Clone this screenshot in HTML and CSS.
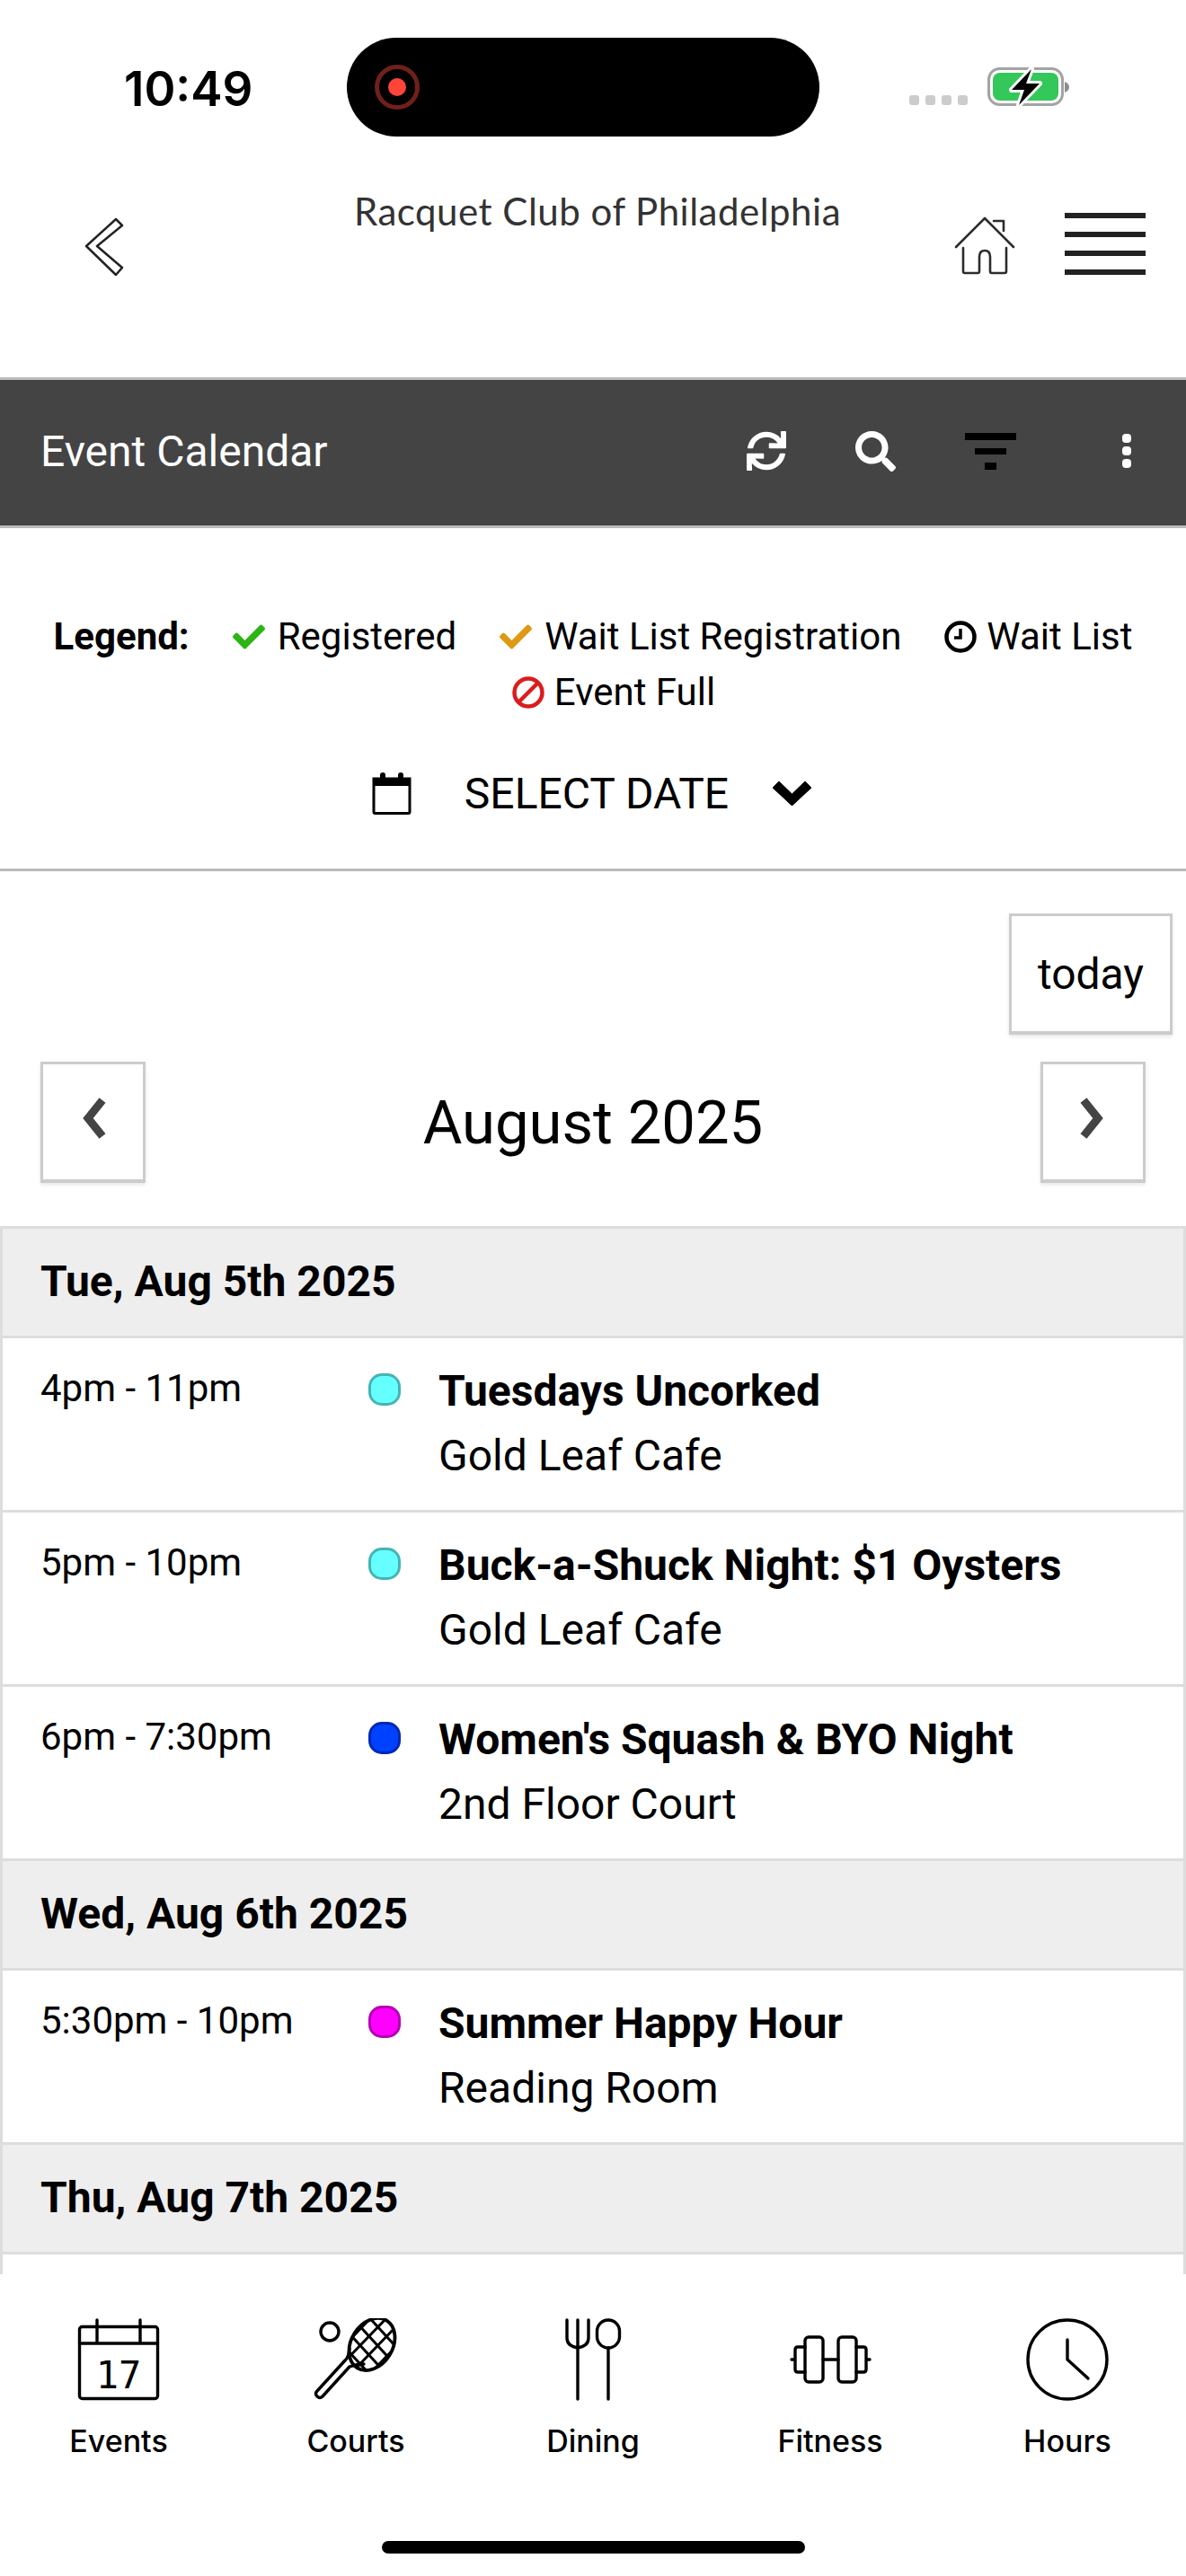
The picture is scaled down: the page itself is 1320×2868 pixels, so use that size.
FILE: index.html
```html
<!DOCTYPE html>
<html>
<head>
	<meta charset="utf-8">
	<meta name="viewport" content="width=device-width, initial-scale=1">
	<title>Event Calendar</title>
	<link rel="stylesheet" href="styles.css">
</head>
<body>

    <div class="top">
        <div class="status">
            <div class="time">10:49</div>
            <div class="island">
                <span class="rec"></span>
            </div>
            <svg class="status-right" width="182" height="46" viewBox="0 0 182 46">
                <rect x="0" y="31" width="11" height="11" rx="3" fill="#ccc"/>
                <rect x="18" y="31" width="11" height="11" rx="3" fill="#ccc"/>
                <rect x="36" y="31" width="11" height="11" rx="3" fill="#ccc"/>
                <rect x="54" y="31" width="11" height="11" rx="3" fill="#ccc"/>
                <rect x="88.5" y="1.5" width="82" height="40" rx="12" fill="none" stroke="#a3a3a3" stroke-width="3"/>
                <rect x="93" y="6" width="73" height="31" rx="8" fill="#34c759"/>
                <path d="M173 16c3 1 5 3 5 6s-2 5-5 6z" fill="#8e8e8e"/>
                <path d="M136 2L114 25h14l-6 17L145 18h-15z" fill="#000" stroke="#fff" stroke-width="6" stroke-linejoin="round" paint-order="stroke"/>
            </svg>
        </div>

        <div class="header">
            <svg class="back" width="45" height="66" viewBox="0 0 45 66">
                <path d="M35 2L42 9L14 32L42 56L35 64L2 32Z" fill="none" stroke="#222" stroke-width="2.5" stroke-linejoin="round"/>
            </svg>
            <div class="club">Racquet Club of Philadelphia</div>
            <svg class="home" width="68" height="66" viewBox="0 0 68 66">
                <path d="M2 34L34 2L66 34M44 5h11v11M10 35V61q0 2 2 2h14q2 0 2-2V45q0-7 6-7t6 7V61q0 2 2 2h14q2 0 2-2V35" fill="none" stroke="#2c2c2c" stroke-width="2.6" stroke-linecap="round" stroke-linejoin="round"/>
            </svg>
            <div class="burger">
                <div></div>
                <div></div>
                <div></div>
                <div></div>
            </div>
        </div>
    </div>

    <div class="titlebar">
        <div class="page-title">Event Calendar</div>
        <div class="tools">
            <svg width="44" height="44" viewBox="0 0 512 512" fill="#fff">
                <path d="M440.65 12.57l4 82.77A247.16 247.16 0 0 0 255.83 8C134.73 8 33.91 94.92 12.29 209.82A12 12 0 0 0 24.09 224h49.05a12 12 0 0 0 11.67-9.26 175.91 175.91 0 0 1 317-56.94l-101.46-4.86a12 12 0 0 0-12.57 12v47.41a12 12 0 0 0 12 12H500a12 12 0 0 0 12-12V12a12 12 0 0 0-12-12h-47.37a12 12 0 0 0-11.98 12.57zM255.83 432a175.61 175.61 0 0 1-146-77.8l101.8 4.87a12 12 0 0 0 12.57-12v-47.4a12 12 0 0 0-12-12H12a12 12 0 0 0-12 12V500a12 12 0 0 0 12 12h47.35a12 12 0 0 0 12-12.6l-4.15-82.57A247.17 247.17 0 0 0 255.83 504c121.11 0 221.93-86.92 243.55-201.82a12 12 0 0 0-11.8-14.18h-49.05a12 12 0 0 0-11.67 9.26A175.86 175.86 0 0 1 255.83 432z"/>
            </svg>
            <svg width="45" height="45" viewBox="0 0 512 512" fill="#fff">
                <path d="M505 442.7L405.3 343c-4.5-4.5-10.6-7-17-7H372c27.6-35.3 44-79.7 44-128C416 93.1 322.9 0 208 0S0 93.1 0 208s93.1 208 208 208c48.3 0 92.7-16.4 128-44v16.3c0 6.4 2.5 12.5 7 17l99.7 99.7c9.4 9.4 24.6 9.4 33.9 0l28.3-28.3c9.4-9.4 9.4-24.6.1-34zM208 336c-70.7 0-128-57.2-128-128 0-70.7 57.2-128 128-128 70.7 0 128 57.2 128 128 0 70.7-57.2 128-128 128z"/>
            </svg>
            <svg width="57" height="41" viewBox="0 0 57 41" fill="#000">
                <rect x="0" y="0" width="57" height="8"/>
                <rect x="11" y="17" width="35" height="7"/>
                <rect x="22" y="33" width="13" height="8"/>
            </svg>
            <svg class="kebab" width="12" height="38" viewBox="0 0 12 38" fill="#fff">
                <rect x="1" y="0" width="10" height="10" rx="4"/>
                <rect x="1" y="14" width="10" height="10" rx="4"/>
                <rect x="1" y="28" width="10" height="10" rx="4"/>
            </svg>
        </div>
    </div>

    <div class="legend">
        <b>Legend:</b>
        <span class="legend-item">
            <svg class="legend-icon" viewBox="0 0 512 512" fill="#2cb515"><path d="M173.898 439.404l-166.4-166.4c-9.997-9.997-9.997-26.206 0-36.204l36.203-36.204c9.997-9.998 26.207-9.998 36.204 0L192 312.69 432.095 72.596c9.997-9.997 26.207-9.997 36.204 0l36.203 36.204c9.997 9.997 9.997 26.206 0 36.204l-294.4 294.401c-9.998 9.997-26.207 9.997-36.204-.001z"/></svg>
            Registered
        </span>
        <span class="legend-item">
            <svg class="legend-icon" viewBox="0 0 512 512" fill="#e09a12"><path d="M173.898 439.404l-166.4-166.4c-9.997-9.997-9.997-26.206 0-36.204l36.203-36.204c9.997-9.998 26.207-9.998 36.204 0L192 312.69 432.095 72.596c9.997-9.997 26.207-9.997 36.204 0l36.203 36.204c9.997 9.997 9.997 26.206 0 36.204l-294.4 294.401c-9.998 9.997-26.207 9.997-36.204-.001z"/></svg>
            Wait List Registration
        </span>
        <span class="legend-item legend-tight">
            <svg class="legend-icon" viewBox="0 0 36 36" fill="none" stroke="#000"><circle cx="18" cy="18" r="15.5" stroke-width="4.5"/><path d="M18 9v10h-7" stroke-width="3.5"/></svg>
            Wait List
        </span>
        <span class="legend-item legend-tight legend-full">
            <svg class="legend-icon" viewBox="0 0 36 36" fill="none" stroke="#dc1c1c" stroke-width="4.5"><circle cx="18" cy="18" r="15.5"/><path d="M28 8L8 28"/></svg>
            Event Full
        </span>
    </div>

    <div class="select-date">
        <svg width="44" height="47" viewBox="0 0 44 47">
            <path d="M2 7h40v37q0 1.500-1.500 1.500H3.500Q2 45.500 2 44Z" fill="none" stroke="#000" stroke-width="3"/>
            <rect x="1" y="6" width="42" height="9" fill="#000"/>
            <rect x="9" y="0" width="6" height="12" rx="3" fill="#000"/>
            <rect x="29" y="0" width="6" height="12" rx="3" fill="#000"/>
        </svg>
        <span class="select-text">SELECT DATE</span>
        <svg width="43" height="28" viewBox="0 0 43 28">
            <path d="M0 8L7 1L21.500 15L36 1L43 8L21.500 28Z" fill="#000" stroke="#000" stroke-width="1" stroke-linejoin="round"/>
        </svg>
    </div>

    <div class="toolbar">
        <div class="today-row">
            <button class="btn today">today</button>
        </div>
        <div class="month-row">
            <button class="btn arrow">
                <svg width="32" height="46" viewBox="0 0 32 46"><path d="M26 3L10 23L26 43" fill="none" stroke="#444" stroke-width="9"/></svg>
            </button>
            <div class="month">August 2025</div>
            <button class="btn arrow">
                <svg width="32" height="46" viewBox="0 0 32 46"><path d="M6 3L22 23L6 43" fill="none" stroke="#444" stroke-width="9"/></svg>
            </button>
        </div>
    </div>

    <div class="list">
        <div class="day">Tue, Aug 5th 2025</div>
        <div class="event">
            <div class="event-time">4pm - 11pm</div>
            <span class="dot cyan"></span>
            <div>
                <div class="event-name">Tuesdays Uncorked</div>
                <div class="event-place">Gold Leaf Cafe</div>
            </div>
        </div>
        <div class="event">
            <div class="event-time">5pm - 10pm</div>
            <span class="dot cyan"></span>
            <div>
                <div class="event-name">Buck-a-Shuck Night: $1 Oysters</div>
                <div class="event-place">Gold Leaf Cafe</div>
            </div>
        </div>
        <div class="event">
            <div class="event-time">6pm - 7:30pm</div>
            <span class="dot blue"></span>
            <div>
                <div class="event-name">Women's Squash &amp; BYO Night</div>
                <div class="event-place">2nd Floor Court</div>
            </div>
        </div>
        <div class="day">Wed, Aug 6th 2025</div>
        <div class="event">
            <div class="event-time">5:30pm - 10pm</div>
            <span class="dot magenta"></span>
            <div>
                <div class="event-name">Summer Happy Hour</div>
                <div class="event-place">Reading Room</div>
            </div>
        </div>
        <div class="day">Thu, Aug 7th 2025</div>
        <div class="list-rest"></div>
    </div>

    <div class="nav">
        <div class="nav-item">
            <svg class="nav-icon" viewBox="0 0 100 92" fill="none" stroke="#000" stroke-width="3.4" stroke-linecap="round">
                <rect x="6.5" y="9.5" width="87" height="80" rx="3"/>
                <path d="M6.5 28h87M26 2v26M74 2v26"/>
                <text class="cal-num" x="50" y="78" text-anchor="middle" fill="#000" stroke="none">17</text>
            </svg>
            <div>Events</div>
        </div>
        <div class="nav-item">
            <svg class="nav-icon" viewBox="0 0 100 92" fill="none" stroke="#000" stroke-width="3.4" stroke-linecap="round" stroke-linejoin="round">
                <defs>
                    <clipPath id="racket-head">
                        <ellipse cx="68" cy="29" rx="23" ry="31" transform="rotate(32 68 29)"/>
                    </clipPath>
                </defs>
                <circle cx="21" cy="15" r="10"/>
                <ellipse cx="68" cy="29" rx="23" ry="31" transform="rotate(32 68 29)" stroke-width="3.8"/>
                <g clip-path="url(#racket-head)" stroke-width="3">
                    <path d="M40 14L84 62M50 4L94 52M32 26L76 74M62 -4L106 44M24 38L68 86"/>
                    <path d="M96 8L44 62M86 -2L34 52M74 -8L24 44M106 20L54 74"/>
                </g>
                <path d="M43 54L13 87q-3 3-6 0t0-6L38 47M38 47q4-3 5-13M43 54q8-3 16-3"/>
            </svg>
            <div>Courts</div>
        </div>
        <div class="nav-item">
            <svg class="nav-icon" viewBox="0 0 100 92" fill="none" stroke="#000" stroke-width="3.4" stroke-linecap="round">
                <path d="M21 2v20q0 9 12 11q12-2 12-11V2M33 2V90"/>
                <rect x="54.5" y="2" width="25" height="31" rx="12.5"/>
                <path d="M67 33V90"/>
            </svg>
            <div>Dining</div>
        </div>
        <div class="nav-item">
            <svg class="nav-icon" viewBox="0 0 100 92" fill="none" stroke="#000" stroke-width="3.4" stroke-linecap="round" stroke-linejoin="round">
                <rect x="22" y="21" width="20" height="50" rx="4"/>
                <rect x="59" y="21" width="20" height="50" rx="4"/>
                <path d="M22 32H14q-3 0-3 3V57q0 3 3 3h8M79 32h8q3 0 3 3V57q0 3-3 3h-8M42 46H59M7 46h4M90 46h4"/>
            </svg>
            <div>Fitness</div>
        </div>
        <div class="nav-item">
            <svg class="nav-icon" viewBox="0 0 100 92" fill="none" stroke="#000" stroke-width="3.4" stroke-linecap="round" stroke-linejoin="round">
                <circle cx="50" cy="46" r="44"/>
                <path d="M50 24V46L73 67"/>
            </svg>
            <div>Hours</div>
        </div>
    </div>
    <div class="home-bar"></div>

</body>
</html>
```

FILE: styles.css
```css
* {
    box-sizing: border-box;
}

body {
    margin: 0;
    width: 1320px;
    height: 2868px;
    overflow: hidden;
    display: flex;
    flex-direction: column;
    position: relative;
    background: #fff;
    color: #000;
    font-family: Roboto, Arial, sans-serif;
}

svg {
    display: block;
    flex-shrink: 0;
}

/* top of the phone */

.top {
    height: 420px;
    padding-top: 42px;
}

.status {
    display: flex;
    height: 110px;
    padding-left: 138px;
}

.time {
    width: 248px;
    font-family: Inter, sans-serif;
    font-size: 53px;
    font-weight: 600;
    line-height: 114px;
}

.island {
    width: 526px;
    height: 110px;
    border-radius: 55px;
    background: #000;
    display: flex;
    align-items: center;
    padding-left: 31px;
}

.rec {
    width: 50px;
    height: 50px;
    border: 5px solid #70201a;
    border-radius: 50%;
    display: flex;
    align-items: center;
    justify-content: center;
}

.rec::after {
    content: "";
    width: 20px;
    height: 20px;
    border-radius: 50%;
    background: #ff453a;
}

.status-right {
    margin: 33px 0 0 100px;
}

.header {
    display: flex;
    align-items: flex-start;
    margin-top: 70px;
    padding: 0 45px 0 94px;
}

.back {
    margin-top: 20px;
}

.club {
    flex: 1;
    margin-top: -5px;
    padding-left: 131px;
    text-align: center;
    font-family: Lato, sans-serif;
    font-size: 42px;
    letter-spacing: 0.5px;
    line-height: 36px;
    color: #333;
}

.home {
    margin: 19px -2px 0 2px;
}

.burger {
    width: 90px;
    margin: 15px 0 0 57px;
    display: flex;
    flex-direction: column;
    gap: 15px;
}

.burger div {
    height: 6px;
    background: #222;
}

/* dark bar */

.titlebar {
    height: 168px;
    flex-shrink: 0;
    border-top: 3px solid #bbb;
    border-bottom: 3px solid #bbb;
    background: #444;
    padding: 0 60px 4px 45px;
    display: flex;
    align-items: center;
    justify-content: space-between;
}

.page-title {
    font-size: 48px;
    color: #fff;
}

.tools {
    display: flex;
    align-items: center;
    gap: 77px;
}

.kebab {
    margin-left: 40px;
}

/* legend */

.legend {
    margin-top: 90px;
    display: flex;
    flex-wrap: wrap;
    justify-content: center;
    column-gap: 48px;
    font-size: 42px;
    line-height: 62px;
}

.legend-item {
    display: flex;
    align-items: center;
    gap: 14px;
}

.legend-tight {
    gap: 11px;
}

.legend-full {
    margin-left: 46px;
}

.legend-icon {
    width: 36px;
    height: 36px;
}

.select-date {
    margin-top: 51px;
    height: 60px;
    padding-right: 3px;
    display: flex;
    align-items: center;
    justify-content: center;
}

.select-text {
    margin: 0 49px 0 59px;
    font-size: 48px;
}

/* calendar toolbar */

.toolbar {
    margin-top: 54px;
    border-top: 3px solid #bbb;
    padding: 47px 15px 48px 45px;
}

.today-row {
    display: flex;
    justify-content: flex-end;
}

.month-row {
    margin-top: 30px;
    padding-right: 30px;
    display: flex;
    align-items: center;
    justify-content: space-between;
}

.btn {
    height: 135px;
    padding: 0;
    background: #fff;
    border: 3px solid #ccc;
    border-bottom-width: 4px;
    box-shadow: 0 2px 4px rgba(0, 0, 0, 0.1);
    display: flex;
    align-items: center;
    justify-content: center;
    font-family: Roboto, Arial, sans-serif;
    color: #000;
}

.today {
    width: 182px;
    font-size: 48px;
}

.arrow {
    width: 117px;
    padding-bottom: 8px;
}

.month {
    font-size: 67px;
}

/* event list */

.list {
    flex: 1;
    border-left: 3px solid #ddd;
    border-right: 3px solid #ddd;
}

.day {
    height: 122px;
    border-top: 3px solid #ddd;
    background: #eee;
    padding-left: 42px;
    font-size: 48px;
    font-weight: 700;
    line-height: 117px;
}

.event {
    height: 194px;
    border-top: 3px solid #ddd;
    padding: 23px 0 0 42px;
    display: flex;
}

.event-time {
    width: 365px;
    font-size: 42px;
    line-height: 66px;
}

.dot {
    width: 36px;
    height: 36px;
    margin: 16px 42px 0 0;
    border: 3px solid;
    border-radius: 15px;
}

.cyan {
    background: #66ffff;
    border-color: #44b4b4;
}

.blue {
    background: #0040ff;
    border-color: #0028b4;
}

.magenta {
    background: #ff00ff;
    border-color: #b400b4;
}

.event-name {
    font-size: 48px;
    font-weight: 700;
    line-height: 72px;
}

.event-place {
    font-size: 48px;
    line-height: 72px;
}

.list-rest {
    border-top: 3px solid #ddd;
}

/* bottom tabs */

.nav {
    height: 336px;
    flex-shrink: 0;
    padding-top: 49px;
    background: #fff;
    display: flex;
    font-family: Inter, sans-serif;
    font-size: 34px;
    font-weight: 500;
}

.nav-item {
    width: 264px;
    display: flex;
    flex-direction: column;
    align-items: center;
    gap: 24px;
    text-align: center;
}

.nav-icon {
    width: 100px;
    height: 92px;
}

.cal-num {
    font-family: "DejaVu Sans Mono", monospace;
    font-size: 42px;
    font-weight: 400;
}

.home-bar {
    position: absolute;
    left: 425px;
    top: 2829px;
    width: 471px;
    height: 14px;
    border-radius: 7px;
    background: #000;
}
```
